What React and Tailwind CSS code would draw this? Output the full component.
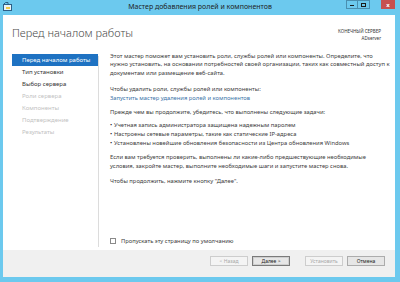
import React from 'react';

const navItems = [
  { label: 'Перед началом работы', state: 'active' },
  { label: 'Тип установки', state: 'normal' },
  { label: 'Выбор сервера', state: 'normal' },
  { label: 'Роли сервера', state: 'disabled' },
  { label: 'Компоненты', state: 'disabled' },
  { label: 'Подтверждение', state: 'disabled' },
  { label: 'Результаты', state: 'disabled' }
];

const bullets = [
  'Учетная запись администратора защищена надежным паролем',
  'Настроены сетевые параметры, такие как статические IP-адреса',
  'Установлены новейшие обновления безопасности из Центра обновления Windows'
];

const WizardIcon = () => (
  <svg width="10" height="9" viewBox="0 0 10 9" className="block">
    <rect x="0.5" y="2.5" width="8" height="6" fill="#e8f4fb" stroke="#2d5f86" />
    <path d="M0.5 2.5 L2.5 0.5 L5 0.5 L5 2.5" fill="none" stroke="#2d5f86" />
    <rect x="3" y="5" width="4" height="2" fill="#f2c94c" />
  </svg>
);

const Button = ({ children, variant = 'normal' }) => {
  const styles = {
    normal: 'border-[#acacac] text-[#222]',
    primary: 'border-[#7a7a7a] text-[#222] ring-1 ring-inset ring-[#cfcfcf]',
    disabled: 'border-[#cdcdcd] text-[#a8a8a8] bg-[#f4f4f4]'
  };
  return (
    <div
      className={`w-[38px] h-[10px] border flex items-center justify-center text-[5px] leading-none bg-[#e6e6e6] ${styles[variant]}`}
    >
      {children}
    </div>
  );
};

export default function App() {
  return (
    <div
      className="w-[400px] h-[282px] bg-[#6cc9ee] flex flex-col overflow-hidden"
      style={{ fontFamily: '"Noto Sans", "Open Sans", sans-serif' }}
    >
      {/* Title bar */}
      <div className="h-[15px] relative flex items-start shrink-0">
        <div className="pl-[3px] pt-[2px]">
          <WizardIcon />
        </div>
        <div className="absolute left-0 right-0 top-[2px] text-center text-[7px] leading-[9px] text-[#1f1f1f]">
          Мастер добавления ролей и компонентов
        </div>
        <div className="ml-auto mr-[5px] flex items-start">
          <div className="w-[12px] h-[9px] border border-[#4a8fb0] flex items-end justify-center pb-[2px]">
            <div className="w-[4px] h-[1.5px] bg-[#1b1b1b]" />
          </div>
          <div className="w-[12px] h-[9px] border border-l-0 border-[#4a8fb0] flex items-center justify-center">
            <div className="w-[5px] h-[4px] border border-t-[1.5px] border-[#1b1b1b]" />
          </div>
          <div className="w-[11px]" />
          <div className="w-[14px] h-[9px] bg-[#c75050] flex items-center justify-center text-[6px] leading-none font-bold text-white">
            x
          </div>
        </div>
      </div>

      {/* Window body */}
      <div className="ml-[3px] w-[392px] h-[262px] bg-white flex flex-col">
        {/* Header */}
        <div className="h-[37px] flex items-start justify-between pl-[9px] pr-[14px] shrink-0">
          <div className="pt-[11px] text-[11px] leading-[14px] font-light text-[#4b4b4b]">
            Перед началом работы
          </div>
          <div className="pt-[13px] text-right text-[4.5px] leading-[6px] text-[#333]">
            <div>КОНЕЧНЫЙ СЕРВЕР</div>
            <div className="mt-[1px]">ADserver</div>
          </div>
        </div>

        {/* Main row */}
        <div className="flex-1 flex">
          {/* Nav */}
          <div className="w-[96px] pl-[9px] pt-[2px] shrink-0 flex">
            <div className="flex-1 flex flex-col pb-[3px]">
              {navItems.map((item) => (
                <div
                  key={item.label}
                  className={`h-[12px] flex items-center pl-[10px] text-[6px] leading-none whitespace-nowrap ${
                    item.state === 'active'
                      ? 'bg-[#1e72c2] text-white'
                      : item.state === 'normal'
                      ? 'text-[#333]'
                      : 'text-[#c2c2c2]'
                  }`}
                >
                  {item.label}
                </div>
              ))}
            </div>
            <div className="w-[1px] bg-[#dcdcdc] mt-[2px] mb-[3px]" />
          </div>

          {/* Content */}
          <div className="flex-1 pl-[11px] flex flex-col text-[5.8px] leading-[8.4px] text-[#3c3c3c] whitespace-nowrap">
            <div>
              <div>Этот мастер поможет вам установить роли, службы ролей или компоненты. Определите, что</div>
              <div>нужно установить, на основании потребностей своей организации, таких как совместный доступ к</div>
              <div>документам или размещение веб-сайта.</div>
            </div>
            <div className="mt-[8px]">
              <div>Чтобы удалить роли, службы ролей или компоненты:</div>
              <div className="text-[#3a73a8]">Запустить мастер удаления ролей и компонентов</div>
            </div>
            <div className="mt-[5.5px]">Прежде чем вы продолжите, убедитесь, что выполнены следующие задачи:</div>
            <div className="mt-[5.5px] flex flex-col leading-[8.8px]">
              {bullets.map((b) => (
                <div key={b} className="flex">
                  <span className="w-[4px] text-[#222]">•</span>
                  <span>{b}</span>
                </div>
              ))}
            </div>
            <div className="mt-[5.5px] leading-[9px]">
              <div>Если вам требуется проверить, выполнены ли какие-либо предшествующие необходимые</div>
              <div>условия, закройте мастер, выполните необходимые шаги и запустите мастер снова.</div>
            </div>
            <div className="mt-[5.5px]">Чтобы продолжить, нажмите кнопку "Далее".</div>

            <div className="mt-auto mb-[5px] flex items-center">
              <div className="w-[6px] h-[6px] border border-[#8a8a8a] bg-white" />
              <span className="ml-[5px]">Пропускать эту страницу по умолчанию</span>
            </div>
          </div>
        </div>

        {/* Footer */}
        <div className="h-[27px] bg-[#f0f0f0] shrink-0 flex items-start justify-end pt-[6px] pr-[10px]">
          <Button variant="disabled">&lt; Назад</Button>
          <div className="ml-[4px]">
            <Button variant="primary">Далее &gt;</Button>
          </div>
          <div className="ml-[15px]">
            <Button variant="disabled">Установить</Button>
          </div>
          <div className="ml-[4px]">
            <Button>Отмена</Button>
          </div>
        </div>
      </div>
    </div>
  );
}
